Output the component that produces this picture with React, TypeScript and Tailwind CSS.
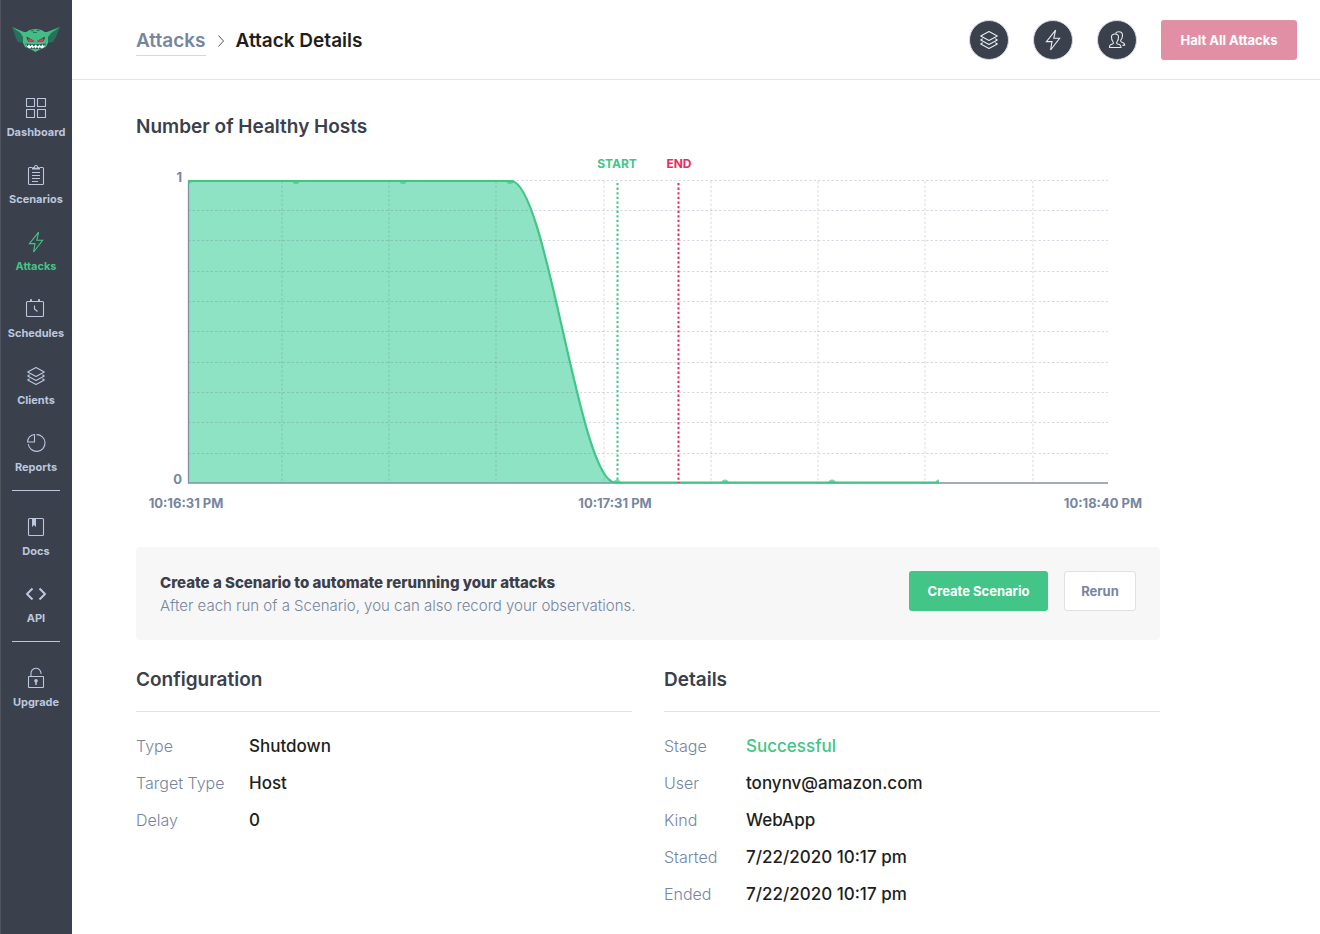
import type { ReactNode } from "react";

const GRID_X = [146, 253, 360, 468, 575, 682, 789, 897];
const GRID_Y = [32, 62, 92, 123, 153, 183, 214, 244, 274, 305];
const UP_POINTS = [52, 160, 267, 374];
const DOWN_POINTS = [481, 589, 696, 803];

function Icon({ children }: { children: ReactNode }) {
  return (
    <svg
      width="24"
      height="24"
      viewBox="0 0 24 24"
      fill="none"
      stroke="currentColor"
      strokeWidth="1.1"
      strokeLinejoin="round"
      aria-hidden="true"
    >
      {children}
    </svg>
  );
}

const layers = (
  <>
    <path d="M12 3.5 20.3 8 12 12.5 3.7 8Z" />
    <path d="M5.8 10.6 3.7 12 12 16.5 20.3 12 18.2 10.6" />
    <path d="M5.8 14.6 3.7 16 12 20.5 20.3 16 18.2 14.6" />
  </>
);

const bolt = <path d="M14.6 2.2 5.4 13.6H11L9.6 22 18.6 10.3H12.8Z" strokeLinejoin="miter" />;

const mainNav = [
  {
    label: "Dashboard",
    icon: (
      <>
        <rect x="2.5" y="2.5" width="8" height="8" />
        <rect x="13.5" y="2.5" width="8" height="8" />
        <rect x="2.5" y="13.5" width="8" height="8" />
        <rect x="13.5" y="13.5" width="8" height="8" />
      </>
    ),
  },
  {
    label: "Scenarios",
    icon: (
      <>
        <path d="M8 4.5H5.5a1 1 0 0 0-1 1v15a1 1 0 0 0 1 1h13a1 1 0 0 0 1-1v-15a1 1 0 0 0-1-1H16" />
        <path
          d="M8 6.5V4.6l2-.6a2 2 0 0 1 4 0l2 .6v1.9ZM12 2.9a1 1 0 1 0 0 2 1 1 0 0 0 0-2Z"
          fill="currentColor"
          fillRule="evenodd"
          stroke="none"
        />
        <path d="M8 9.5h8M8 12.5h8M8 15.5h8M8 18.5h6" />
      </>
    ),
  },
  { label: "Attacks", active: true, icon: bolt },
  {
    label: "Schedules",
    icon: (
      <>
        <rect x="2.5" y="4.5" width="17" height="15" rx="1" />
        <path d="M7 2.3v2M15 2.3v2" strokeWidth="2" />
        <path d="M10.5 8.5v3.5l3 2.5" />
      </>
    ),
  },
  { label: "Clients", icon: layers },
  {
    label: "Reports",
    icon: (
      <>
        <path d="M12.5 3.6a8.4 8.4 0 1 1-8.2 9.4" />
        <path d="M10.5 3.5v7.5h-7a7.5 7.5 0 0 1 7-7.5Z" />
      </>
    ),
  },
];

const docsNav = [
  {
    label: "Docs",
    icon: (
      <>
        <rect x="4.5" y="3.5" width="15" height="17" rx="1" />
        <path d="M8 4h4v8l-2-2-2 2Z" fill="currentColor" stroke="none" />
      </>
    ),
  },
  {
    label: "API",
    icon: <path d="m8.5 6.5-5.5 5.5 5.5 5.5M15.5 6.5l5.5 5.5-5.5 5.5" strokeWidth="2" />,
  },
];

const upgradeNav = [
  {
    label: "Upgrade",
    icon: (
      <>
        <rect x="4.5" y="10.5" width="15" height="11" rx="0.5" />
        <path d="M7 10.5V7.5a5 5 0 0 1 10-.5v1" />
        <circle cx="12" cy="14.7" r="1.8" fill="currentColor" stroke="none" />
        <path d="M12 15v4" strokeWidth="1.5" />
      </>
    ),
  },
];

function NavList({ items }: { items: any[] }) {
  return (
    <ul>
      {items.map((item) => (
        <li key={item.label}>
          <a
            href="#"
            className={`flex h-[67px] flex-col items-center gap-1 pt-3 ${
              item.active ? "text-[#42c587]" : "text-[#bcc7de]"
            }`}
          >
            <Icon>{item.icon}</Icon>
            <span className="text-[11px] font-bold leading-4">{item.label}</span>
          </a>
        </li>
      ))}
    </ul>
  );
}

function Logo() {
  return (
    <svg width="48" height="28" viewBox="0 0 48 28" role="img" aria-label="Gremlin">
      <path d="M0 1 12 7V17L6 16 3.5 11Z" fill="#27705a" />
      <path d="M48 1 35 7V17L41 16 44 11Z" fill="#27705a" />
      <path
        d="M0 1 12 6 14.5 6C17 3.8 20 3 23.5 3S30 3.8 32.5 6L35 6 48 1 39 7 36 11V17L34 21 28 23.5 23.5 26 19 23.5 13 21 11 17V11L8.5 7Z"
        fill="#42bd85"
      />
      <path d="M19 4.8h3M24.5 4.5h3M21 6.5h4" stroke="#27705a" fill="none" />
      <path d="M14.5 10.5 22.5 15 20.5 16H17C15.5 15 14.5 13 14.5 10.5ZM33 10.5 25 15 27 16H30.5C32 15 33 13 33 10.5Z" fill="#5d3a4c" />
      <path
        d="M16 12.8 22 14.7 20 15.5H17ZM31.5 12.8 25.5 14.7 27.5 15.5H30.5Z"
        fill="#f0345c"
        stroke="#f0345c"
        strokeWidth="0.4"
      />
      <path d="M13.5 17.5C17 18.5 30 18.5 34 17.5 34 21 31.500 23 28.500 23H19C16 23 13.500 21 13.500 17.500Z" fill="#2b5650" />
      <path
        d="M14 17.8 15.5 20.3 17 18.3 18.5 20.3 20 18.4 21.8 20.5 23.7 18.5 25.600 20.500 27.500 18.400 29 20.300 30.500 18.300 32 20.300 33.500 17.800C33.500 20.500 31.500 22.500 29 22.600L28 21 26.500 22.700 25 21 23.700 22.700 22.300 21 21 22.700 19.500 21 18.500 22.600C16 22.500 14 20.500 14 17.800Z"
        fill="#f4fbf8"
      />
    </svg>
  );
}

function Sidebar() {
  return (
    <aside className="w-[72px] shrink-0 border-l border-[#50555f] bg-[#3a404c] pr-px">
      <a href="#" className="flex h-20 items-center justify-center">
        <Logo />
      </a>
      <nav className="pt-1">
        <NavList items={mainNav} />
        <hr className="mx-auto mb-3 mt-1 w-12 border-[#bcc7de]" />
        <NavList items={docsNav} />
        <hr className="mx-auto mb-3 mt-1 w-12 border-[#bcc7de]" />
        <NavList items={upgradeNav} />
      </nav>
    </aside>
  );
}

function RoundButton({ label, children }: { label: string; children: ReactNode }) {
  return (
    <button
      aria-label={label}
      className="flex size-10 items-center justify-center rounded-full border border-[#d9dade] bg-[#3a404c] text-[#e8eaee]"
    >
      {children}
    </button>
  );
}

function Header() {
  return (
    <header className="flex h-20 items-center justify-between border-b border-[#e4e5e6] pl-16 pr-[23px]">
      <div className="flex items-center pt-0.5 text-[19px] font-semibold leading-7">
        <a href="#" className="mt-0.5 border-b border-[#d5d7da] text-[#76869f]">
          Attacks
        </a>
        <svg width="8" height="14" viewBox="0 0 8 14" fill="none" stroke="#555" className="mx-[11px]" aria-hidden="true">
          <path d="m1.5 1.5 5 5.5-5 5.5" />
        </svg>
        <h1 className="text-[#1d1e20]">Attack Details</h1>
      </div>
      <div className="flex items-center gap-6">
        <RoundButton label="Clients">
          <Icon>{layers}</Icon>
        </RoundButton>
        <RoundButton label="Attacks">
          <Icon>{bolt}</Icon>
        </RoundButton>
        <RoundButton label="Team">
          <Icon>
            <path d="M4.5 19.5c0-2.500.8-2.800 3-3.500 1-.3 1.200-1.500.3-2.500-1.300-1.400-1.300-3-1.300-4.500C6.500 7 8 6 10 6s3.500 1 3.500 3c0 1.500 0 3.100-1.300 4.500-.9 1-.7 2.200.3 2.500 2.500.7 3.500 1 3.500 3.500Z" />
            <path d="M10.5 5.5C11 4.2 12.2 3.7 13.8 3.7c2.200 0 3.700 1.300 3.700 3.600 0 1.500-.2 3-1.400 4.300-.8 1-.6 2 .4 2.400 2 .6 3.200 1 3.200 3.200l-2.200.2" />
          </Icon>
        </RoundButton>
        <button className="h-10 w-[136px] rounded-[3px] bg-[#e08fa5] pt-0.5 text-[13px] font-bold text-white">
          Halt All Attacks
        </button>
      </div>
    </header>
  );
}

function HealthChart() {
  return (
    <svg
      viewBox="0 0 1024 375"
      className="mt-1.5 w-full font-bold"
      role="img"
      aria-label="Healthy hosts over time"
    >
      <defs>
        <clipPath id="plot">
          <rect x="52" y="32" width="751" height="303" />
        </clipPath>
      </defs>
      <path d="M52 33H375C411 33 443 335 479 335H52Z" fill="#8de3c3" />
      <g stroke="#5f7088" strokeOpacity="0.25" strokeDasharray="2.5 2">
        {GRID_Y.map((y) => (
          <path key={y} d={`M52 ${y + 0.5}H972`} />
        ))}
        {GRID_X.map((x) => (
          <path key={x} d={`M${x} 33V335`} />
        ))}
      </g>
      <path d="M52.5 33V335H972" fill="none" stroke="#8391a5" strokeWidth="1.3" />
      <path d="M52 33H375C411 33 443 334.5 479 334.5H803" fill="none" stroke="#42c587" strokeWidth="2.2" />
      <g fill="#42c587" fillOpacity="0.7" clipPath="url(#plot)">
        {UP_POINTS.map((x) => (
          <circle key={x} cx={x} cy="32.5" r="3.5" />
        ))}
        {DOWN_POINTS.map((x) => (
          <circle key={x} cx={x} cy="335" r="3.5" />
        ))}
      </g>
      <path d="M481.5 35V335" stroke="#42c587" strokeWidth="2" strokeDasharray="2.3 2.3" />
      <path d="M542.5 35V335" stroke="#e52e5c" strokeWidth="2" strokeDasharray="2.3 2.3" />
      <g textAnchor="middle" fontSize="12">
        <text x="481" y="20" fill="#42c587">START</text>
        <text x="543" y="20" fill="#e52e5c">END</text>
      </g>
      <g fill="#76869f" fontSize="13">
        <text x="46" y="34" textAnchor="end">1</text>
        <text x="46" y="336" textAnchor="end">0</text>
      </g>
      <g fill="#76869f" fontSize="13" textAnchor="middle">
        <text x="50" y="360">10:16:31 PM</text>
        <text x="479" y="360">10:17:31 PM</text>
        <text x="967" y="360">10:18:40 PM</text>
      </g>
    </svg>
  );
}

function InfoSection({ title, rows, labelWidth }: { title: string; rows: string[][]; labelWidth: string }) {
  return (
    <section>
      <h2 className="border-b border-[#e0e1e2] pb-[15px] text-[19px] font-semibold leading-8 text-[#3a404c]">
        {title}
      </h2>
      <dl className="mt-4 text-[17px] leading-[37px]">
        {rows.map(([label, value]) => (
          <div key={label} className="flex">
            <dt className={`${labelWidth} shrink-0 text-base font-light leading-[37px] text-[#76869f]`}>{label}</dt>
            <dd className={`font-medium ${label === "Stage" ? "text-[#42c587]" : "text-[#1d1e20]"}`}>{value}</dd>
          </div>
        ))}
      </dl>
    </section>
  );
}

export default function App() {
  return (
    <div className="flex min-h-screen bg-white font-['Inter','Liberation_Sans',sans-serif]">
      <Sidebar />
      <div className="min-w-0 flex-1">
        <Header />
        <main className="px-16 pb-5 pt-8">
          <div className="max-w-5xl">
            <h2 className="text-[19px] font-semibold leading-[30px] text-[#3a404c]">Number of Healthy Hosts</h2>
            <HealthChart />
            <section className="mt-6 flex items-start justify-between rounded bg-[#f7f7f7] p-6">
              <div>
                <h3 className="text-[15px] font-extrabold leading-6 text-[#3a404c]">
                  Create a Scenario to automate rerunning your attacks
                </h3>
                <p className="text-[15px] font-light leading-[21px] text-[#76869f]">
                  After each run of a Scenario, you can also record your observations.
                </p>
              </div>
              <div className="flex gap-4">
                <button className="h-10 w-[139px] rounded-[3px] bg-[#42c587] pt-0.5 text-[13px] font-bold text-white">
                  Create Scenario
                </button>
                <button className="h-10 w-[72px] rounded-[3px] border border-[#e0e1e2] bg-white pt-0.5 text-[13px] font-bold text-[#76869f]">
                  Rerun
                </button>
              </div>
            </section>
            <div className="mt-6 grid grid-cols-2 gap-8">
              <InfoSection
                title="Configuration"
                labelWidth="w-[113px]"
                rows={[
                  ["Type", "Shutdown"],
                  ["Target Type", "Host"],
                  ["Delay", "0"],
                ]}
              />
              <InfoSection
                title="Details"
                labelWidth="w-[82px]"
                rows={[
                  ["Stage", "Successful"],
                  ["User", "tonynv@amazon.com"],
                  ["Kind", "WebApp"],
                  ["Started", "7/22/2020 10:17 pm"],
                  ["Ended", "7/22/2020 10:17 pm"],
                ]}
              />
            </div>
          </div>
        </main>
      </div>
    </div>
  );
}
